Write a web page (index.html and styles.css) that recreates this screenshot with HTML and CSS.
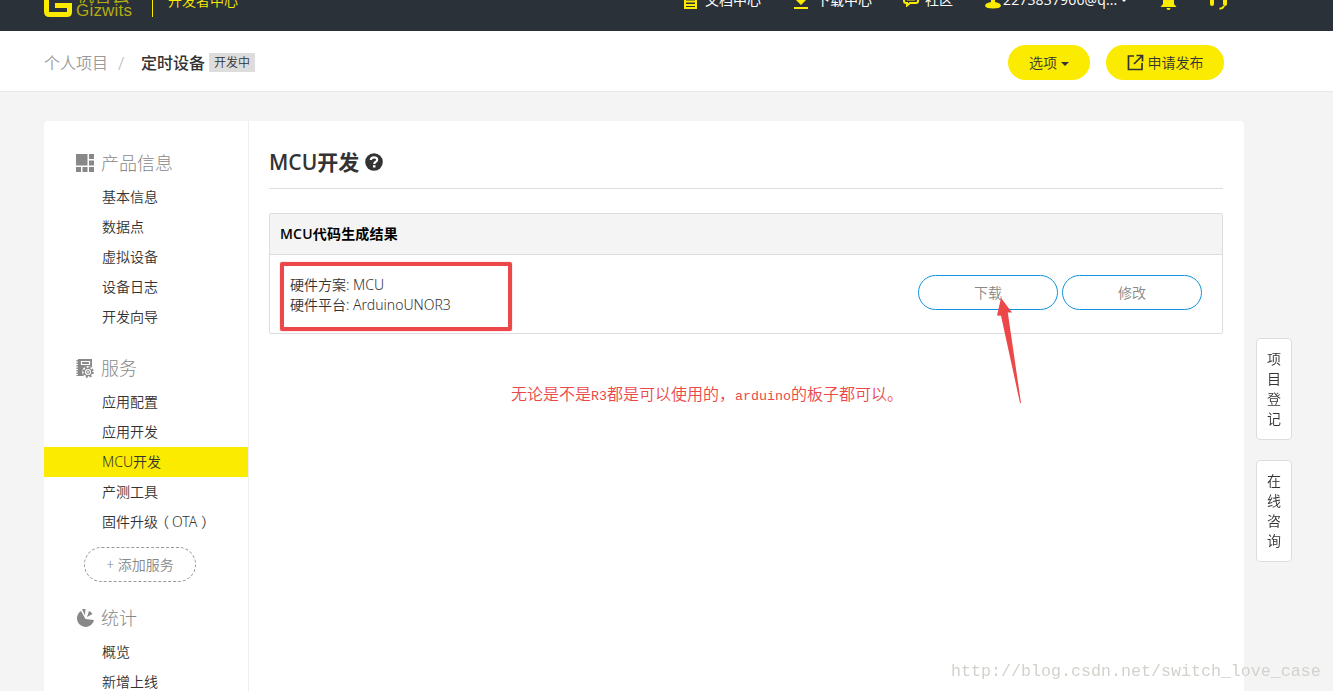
FILE: index.html
```html
<!DOCTYPE html>
<html lang="zh-CN">
<head>
    <meta charset="UTF-8">
    <title>MCU开发 - 机智云开发者中心</title>
    <link rel="stylesheet" href="styles.css">
</head>
<body>
    <header class="topbar">
        <a class="logo">
            <svg class="logo-mark" width="28" height="29" viewBox="0 0 28 29" fill="none" stroke="#fbeb00" stroke-width="5">
                <path d="M25.5 2.5H5.5Q2.5 2.5 2.5 5.5V23.500Q2.5 26.500 5.500 26.500H23Q25.500 26.500 25.500 24V17.500H11"/>
            </svg>
            <span class="logo-text">
                <span class="logo-cn">机智云</span>
                <span class="logo-en">Gizwits</span>
            </span>
        </a>
        <span class="site-name">开发者中心</span>
        <nav class="topnav">
            <a class="nav-docs">
                <svg width="13" height="16" viewBox="0 0 13 16" fill="none" stroke="#fbeb00" stroke-width="2"><path d="M1 1H12V15H1ZM1 5H12M1 8.500H12M1 12H12"/></svg>
                <span>文档中心</span>
            </a>
            <a class="nav-download">
                <svg width="14" height="16" viewBox="0 0 14 16" fill="#fbeb00"><path d="M5 0H9V6H13L7 12L1 6H5ZM0 14H14V16H0Z"/></svg>
                <span>下载中心</span>
            </a>
            <a class="nav-community">
                <svg width="16" height="16" viewBox="0 0 16 16" fill="none" stroke="#fbeb00" stroke-width="2"><path d="M3 3H13Q15 3 15 5V10Q15 12 13 12H7L4 14.500V12H3Q1 12 1 10V5Q1 3 3 3ZM4 8.500H12"/></svg>
                <span>社区</span>
            </a>
            <a class="nav-user">
                <svg width="16" height="18" viewBox="0 0 16 18" fill="#fbeb00"><circle cx="8" cy="5" r="4.500"/><path d="M6 8H10V11Q16 12 16 15Q15 17.500 8 17.500Q1 17.500 0 15Q0 12 6 11Z"/></svg>
                <span>2273837966@q...</span>
                <i class="caret"></i>
            </a>
            <a class="nav-bell">
                <svg width="17" height="18" viewBox="0 0 17 18" fill="#fbeb00"><path d="M8.500 0Q14 2 14 8V12L16.500 15H.5L3 12V8Q3 2 8.500 0ZM6.500 16H10.500Q10.500 18 8.500 18Q6.500 18 6.500 16Z"/></svg>
            </a>
            <a class="nav-service">
                <svg width="19" height="20" viewBox="0 0 19 20" fill="none" stroke="#fbeb00" stroke-width="2"><path d="M2 10Q1 2 9.500 2Q18 2 17 10"/><path d="M3 10V14M16 10V14" stroke-width="4" stroke-linecap="round"/><path d="M15 16Q14 18.500 10.500 18.800"/></svg>
            </a>
        </nav>
    </header>

    <div class="crumb-bar">
        <span class="crumb-parent">个人项目</span>
        <span class="crumb-sep">/</span>
        <span class="crumb-current">定时设备</span>
        <span class="status">开发中</span>
        <div class="actions">
            <button class="btn btn-options">选项<i class="caret"></i></button>
            <button class="btn btn-publish">
                <svg width="17" height="17" viewBox="0 0 17 17" fill="none" stroke="#333" stroke-width="1.700"><path d="M7 2H1.500V15.500H15V9M9.500 1.500H15.500V7.500M15.500 1.500L7 10"/></svg>
                <span>申请发布</span>
            </button>
        </div>
    </div>

    <div class="container">
        <aside class="sidebar">
            <section class="menu">
                <h3>
                    <svg width="18" height="18" viewBox="0 0 18 18" fill="#888"><path d="M0 0H11.500V11.500H0ZM13 0H18V5H13ZM13 6.500H18V11.500H13ZM0 13H5V18H0ZM6.500 13H11.500V18H6.500ZM13 13H18V18H13Z"/></svg>
                    产品信息
                </h3>
                <ul>
                    <li>基本信息</li>
                    <li>数据点</li>
                    <li>虚拟设备</li>
                    <li>设备日志</li>
                    <li>开发向导</li>
                </ul>
            </section>
            <section class="menu">
                <h3>
                    <svg width="18" height="20" viewBox="0 0 18 20">
                        <path d="M2 1H16V18H2Z" fill="#888"/>
                        <path d="M1.500 2V18" stroke="#888" stroke-width="2" stroke-dasharray="1.500 1"/>
                        <path d="M5.500 3.500H13.500V6.500H5.500Z" fill="none" stroke="#fff" stroke-width="1.200"/>
                        <circle cx="12" cy="14" r="6" fill="#fff"/>
                        <circle cx="12" cy="14" r="4.800" fill="none" stroke="#888" stroke-width="2" stroke-dasharray="2 1.770"/>
                        <circle cx="12" cy="14" r="3.700" fill="none" stroke="#888" stroke-width="1.300"/>
                        <circle cx="12" cy="14" r="1.500" fill="none" stroke="#888"/>
                    </svg>
                    服务
                </h3>
                <ul>
                    <li>应用配置</li>
                    <li>应用开发</li>
                    <li class="active">MCU开发</li>
                    <li>产测工具</li>
                    <li>固件升级<span class="paren">（</span>OTA<span class="paren">）</span></li>
                </ul>
                <button class="btn-add">+ 添加服务</button>
            </section>
            <section class="menu">
                <h3>
                    <svg width="18" height="20" viewBox="0 0 18 20" fill="#888"><path d="M9.500 11L5 3A8.600 8.600 0 1 0 18 12ZM6 1H9.500L9 7.500ZM11 9L13 3Q15.500 4 16.500 6Z"/></svg>
                    统计
                </h3>
                <ul>
                    <li>概览</li>
                    <li>新增上线</li>
                </ul>
            </section>
        </aside>

        <main class="content">
            <h1>
                MCU开发
                <svg width="18" height="18" viewBox="0 0 18 18"><circle cx="9" cy="9" r="8.800" fill="#333"/><path d="M5.800 7Q5.800 4.300 9 4.300Q12.200 4.300 12.200 6.800Q12.200 8.200 10.500 9Q9.300 9.600 9.300 11" fill="none" stroke="#fff" stroke-width="2.200"/><path d="M8 12.200H10.500V14.500H8Z" fill="#fff"/></svg>
            </h1>
            <div class="panel">
                <div class="panel-head">MCU代码生成结果</div>
                <div class="panel-body">
                    <div class="info">
                        <p>硬件方案: MCU</p>
                        <p>硬件平台: ArduinoUNOR3</p>
                        <div class="mark-box"></div>
                    </div>
                    <div class="panel-btns">
                        <button class="btn-line">下载
                            <svg class="mark-arrow" width="36" height="106" viewBox="0 0 36 106" fill="#ec4849"><path d="M4 0L15 14.500L10.800 14.500L24 105H23L4 17.800L0 17.500Z"/></svg>
                        </button>
                        <button class="btn-line">修改</button>
                    </div>
                </div>
            </div>
            <p class="note">无论是不是<span>R3</span>都是可以使用的，<span>arduino</span>的板子都可以。</p>
        </main>
    </div>

    <div class="float-btns">
        <a>项目登记</a>
        <a>在线咨询</a>
    </div>
    <div class="watermark">http://blog.csdn.net/switch_love_case</div>
</body>
</html>
```
FILE: styles.css
```css
* {
    box-sizing: border-box;
    margin: 0;
    padding: 0;
}

body {
    height: 691px;
    overflow: hidden;
    background: #f4f4f4;
    color: #333;
    font: 350 14px/20px "Noto Sans", "Noto Sans CJK SC", sans-serif;
}

button {
    font: inherit;
    color: inherit;
    cursor: pointer;
}

svg {
    flex: none;
}

ul {
    list-style: none;
}

.caret {
    border: 4px solid transparent;
    border-top-color: currentColor;
    border-bottom: 0;
}

/* top bar, scrolled partly out of view */
.topbar {
    display: flex;
    align-items: flex-start;
    height: 31px;
    padding-left: 44px;
    background: #2a3138;
    overflow: hidden;
}

.logo {
    display: flex;
    gap: 4px;
    width: 109px;
    height: 29px;
    margin-top: -12px;
    border-right: 1px solid #fbeb00;
}

.logo-text {
    display: flex;
    flex-direction: column;
    color: #b5ac14;
}

.logo-cn {
    font-size: 18px;
    line-height: 14px;
}

.logo-en {
    font: 17px/18px "Liberation Sans", sans-serif;
    letter-spacing: 0.2px;
}

.site-name {
    margin: -9px 0 0 15px;
    color: #fbeb00;
}

.topnav {
    display: flex;
    margin-left: 446px;
    margin-top: -10px;
    color: #fff;
    font-family: "Open Sans", "Noto Sans CJK SC", sans-serif;
    font-weight: 400;
}

.topnav a {
    display: flex;
    align-items: center;
    height: 20px;
    white-space: nowrap;
}

.nav-docs {
    width: 110px;
    gap: 8px;
}

.nav-download {
    width: 109px;
    gap: 8px;
}

.nav-community {
    width: 82px;
    gap: 6px;
}

.nav-user {
    width: 175px;
    gap: 2px;
    letter-spacing: 0.15px;
}

.nav-user .caret {
    margin-left: 1px;
}

.nav-bell {
    width: 49px;
}

.nav-docs svg,
.nav-download svg,
.nav-bell svg {
    margin-top: 2px;
}

.nav-community svg {
    margin-top: -2px;
}

.crumb-bar {
    display: flex;
    align-items: center;
    height: 61px;
    padding: 3px 109px 0 44px;
    background: #fff;
    border-bottom: 1px solid #e8e8e8;
    font-size: 16px;
}

.crumb-parent {
    color: #999;
}

.crumb-sep {
    width: 33px;
    padding-left: 10px;
    color: #bbb;
    font-size: 18px;
}

.crumb-current {
    font-weight: 500;
}

.status {
    height: 19px;
    margin: -1px 0 0 4px;
    padding: 0 5px;
    background: #ddd;
    font-size: 12px;
    line-height: 20px;
}

.actions {
    display: flex;
    gap: 16px;
    margin-left: auto;
}

.btn {
    display: flex;
    align-items: center;
    justify-content: center;
    gap: 4px;
    height: 35px;
    border: 0;
    border-radius: 18px;
    background: #fbeb00;
    font-size: 14px;
}

.btn-options {
    width: 82px;
}

.btn-publish {
    width: 118px;
}

.btn .caret {
    margin-top: 2px;
}

.container {
    display: flex;
    width: 1200px;
    height: 600px;
    margin: 29px 0 0 44px;
    background: #fff;
    border-radius: 4px;
}

.sidebar {
    width: 205px;
    padding-top: 23px;
    border-right: 1px solid #eee;
}

.menu {
    margin-bottom: 17px;
}

.menu h3 {
    display: flex;
    align-items: center;
    gap: 7px;
    height: 38px;
    padding-left: 32px;
    color: #888;
    font-size: 18px;
    font-weight: 300;
}

.menu li {
    height: 30px;
    padding-left: 58px;
    line-height: 29px;
    white-space: nowrap;
}

.menu .active {
    background: #fbeb00;
}

/* brackets sit in the middle of their square */
.paren {
    position: relative;
    left: -3px;
}

.paren + .paren {
    left: 4px;
}

.btn-add {
    display: block;
    width: 112px;
    height: 35px;
    margin: 10px 0 0 40px;
    border: 1px dashed #999;
    border-radius: 18px;
    background: none;
    color: #888;
}

.content {
    flex: 1;
    padding: 15px 21px 0 20px;
}

.content h1 {
    display: flex;
    align-items: center;
    gap: 6px;
    height: 53px;
    margin-bottom: 24px;
    border-bottom: 1px solid #ddd;
    font-family: "Open Sans", "Noto Sans CJK SC", sans-serif;
    font-size: 21px;
    font-weight: 600;
}

.panel {
    border: 1px solid #ddd;
    border-radius: 2px;
}

.panel-head {
    height: 41px;
    padding-left: 10px;
    background: #f4f4f4;
    border-bottom: 1px solid #ddd;
    color: #000;
    font-family: "Open Sans", "Noto Sans CJK SC", sans-serif;
    font-weight: 600;
    line-height: 40px;
    letter-spacing: 0.2px;
}

.panel-body {
    display: flex;
    justify-content: space-between;
    height: 78px;
    padding: 20px;
}

.info {
    position: relative;
}

.mark-box {
    position: absolute;
    top: -13px;
    left: -10px;
    width: 232px;
    height: 69px;
    border: 4px solid #ec4849;
    border-radius: 2px;
    box-shadow: 0 0 1px #ec4849;
}

.panel-btns {
    display: flex;
    gap: 4px;
}

.btn-line {
    position: relative;
    width: 140px;
    height: 35px;
    border: 1px solid #1094e0;
    border-radius: 18px;
    background: #fff;
    color: #888;
}

.mark-arrow {
    position: absolute;
    top: 22px;
    left: 78px;
    z-index: 1;
}

.note {
    margin: 50px 0 0 242px;
    color: #ec4849;
    font-size: 16px;
    white-space: nowrap;
}

.note span {
    font-family: "Liberation Mono", monospace;
    font-size: 13.33px;
    font-weight: 400;
}

.float-btns {
    position: fixed;
    top: 338px;
    left: 1256px;
}

.float-btns a {
    display: block;
    width: 36px;
    height: 102px;
    margin-bottom: 20px;
    padding: 10px;
    background: #fff;
    border: 1px solid #ddd;
    border-radius: 4px;
    word-break: break-all;
}

.watermark {
    position: fixed;
    top: 662px;
    left: 951px;
    color: #d2d2cd;
    font: 16.66px/20px "Liberation Mono", monospace;
}
```
